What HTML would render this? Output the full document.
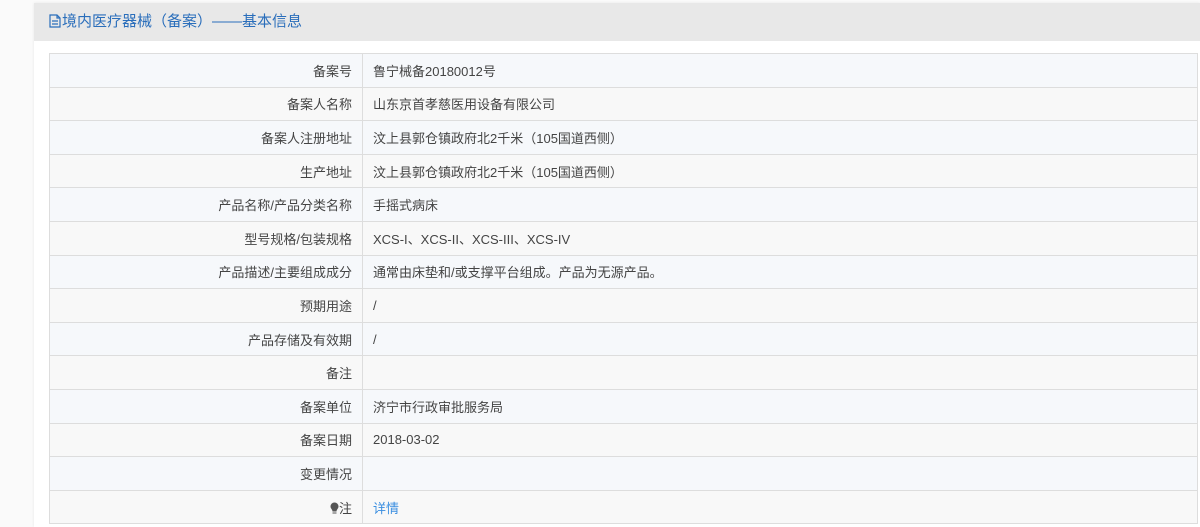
<!DOCTYPE html>
<html><head><meta charset="utf-8"><style>
body{margin:0;background:#fff;width:1200px;height:527px;overflow:hidden;font-family:"Liberation Sans","Noto Sans CJK SC",sans-serif;}
.page{position:absolute;left:0;top:0;width:1200px;height:527px;background:#fafafa;}
.panel{position:absolute;left:34px;top:3px;width:1166px;height:524px;background:#fff;box-shadow:0 0 3px rgba(0,0,0,.08);}
.hd{height:38px;background:#e8e8e8;color:#2a6ebb;font-size:15px;line-height:38px;padding-left:15px;}
.hd svg{vertical-align:-2px;margin-right:1px}
table{position:absolute;left:15px;top:50px;width:1149px;border-collapse:collapse;font-size:13px;color:#444;}
td{border:1px solid #ddd;height:32.6px;padding:0 10px;}
td.l{width:292px;text-align:right;}
tr:nth-child(odd) td{background:#f6f8fb}
tr:nth-child(even) td{background:#f8f8f8}
a{color:#3a8ee0;text-decoration:none}
</style></head><body><div class="page"><div class="panel">
<div class="hd"><svg width="12" height="14" viewBox="0 0 12 14"><path d="M1 1h7l3 3v9H1z M8 1v3h3 M3 7h6 M3 10h6" fill="none" stroke="#2a6ebb" stroke-width="1.2"/></svg>境内医疗器械（备案）——基本信息</div>
<table>
<tr><td class="l">备案号</td><td>鲁宁械备20180012号</td></tr>
<tr><td class="l">备案人名称</td><td>山东京首孝慈医用设备有限公司</td></tr>
<tr><td class="l">备案人注册地址</td><td>汶上县郭仓镇政府北2千米（105国道西侧）</td></tr>
<tr><td class="l">生产地址</td><td>汶上县郭仓镇政府北2千米（105国道西侧）</td></tr>
<tr><td class="l">产品名称/产品分类名称</td><td>手摇式病床</td></tr>
<tr><td class="l">型号规格/包装规格</td><td>XCS-I、XCS-II、XCS-III、XCS-IV</td></tr>
<tr><td class="l">产品描述/主要组成成分</td><td>通常由床垫和/或支撑平台组成。产品为无源产品。</td></tr>
<tr><td class="l">预期用途</td><td>/</td></tr>
<tr><td class="l">产品存储及有效期</td><td>/</td></tr>
<tr><td class="l">备注</td><td></td></tr>
<tr><td class="l">备案单位</td><td>济宁市行政审批服务局</td></tr>
<tr><td class="l">备案日期</td><td>2018-03-02</td></tr>
<tr><td class="l">变更情况</td><td></td></tr>
<tr><td class="l"><svg width="9" height="12" viewBox="0 0 9 12" style="vertical-align:-1px"><path d="M4.5 0.5a4 4 0 0 1 4 4c0 2-2 3-2 5h-4c0-2-2-3-2-5a4 4 0 0 1 4-4zM2.5 10.5h4v1h-4z" fill="#555"/></svg>注</td><td><a>详情</a></td></tr>
</table>
</div></div></body></html>
